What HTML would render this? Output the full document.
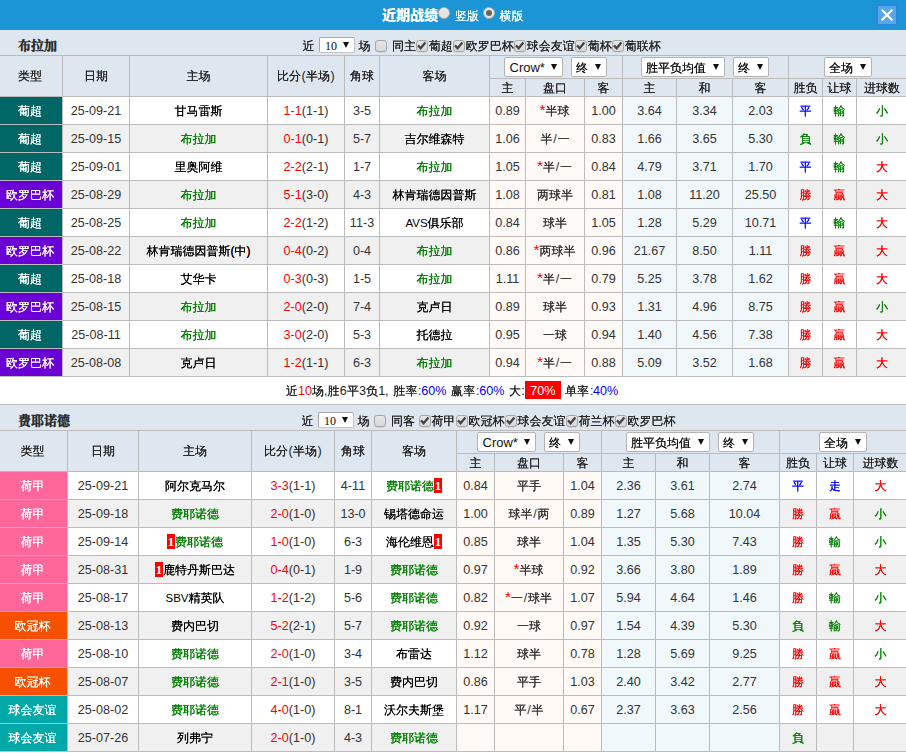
<!DOCTYPE html><html lang="zh-CN"><head><meta charset="utf-8"><title>近期战绩</title><style>
*{box-sizing:border-box;margin:0;padding:0}
html,body{width:906px;height:753px;overflow:hidden;background:#fff}
body{font-family:"Liberation Sans","WenQuanYi Zen Hei","Noto Sans CJK SC",sans-serif;font-size:12px;color:#333;position:relative}
.bar{position:relative;height:30px;background:#1b95d6;color:#fff}
.title{font-family:"Liberation Sans","Noto Sans CJK SC",sans-serif;position:absolute;left:382px;top:0;line-height:31px;font-size:14px;font-weight:bold;letter-spacing:0;text-shadow:0 0 0}
.rl{position:absolute;top:0;line-height:33px;font-size:12px}
.radio{position:absolute;top:7px;width:12px;height:12px;border-radius:50%;background:#e4e4e4;border:1px solid #aaa;box-shadow:inset 0 1px 1px #fff}
.radio.on:after{content:"";position:absolute;left:2px;top:2px;width:6px;height:6px;border-radius:50%;background:#666}
.close{position:absolute;left:876px;top:4px;width:22px;height:22px;border:2px solid #2b86dd;background:#55a7ea}
.close svg{display:block}
.sec{position:relative;height:26px;background:#dee6ef;border-bottom:1px solid #bbb}
.tn{position:absolute;left:18px;top:0;line-height:31px;font-size:13px;font-weight:bold;-webkit-text-stroke:0.35px #222;color:#222;font-family:"Liberation Serif","Noto Serif CJK SC",serif}
.ft{position:absolute;top:0;line-height:33px;white-space:nowrap;color:#222}
.cba{position:absolute;top:10px}
.cb{display:block;width:11.5px;height:11.5px;border:1px solid #a6a6a6;border-radius:3px;background:linear-gradient(#e6e6e6,#d8d8d8);box-shadow:0 0.5px 0.5px rgba(0,0,0,.12)}
.cb svg{display:block;margin:-1px 0 0 -1px}
.sel{position:absolute;display:block;background:#fff;border:1px solid #b4b4b4;border-radius:2px;height:20px;top:1px;text-align:left;color:#111}
.sel .st{position:absolute;left:4px;top:0;white-space:nowrap;line-height:21px;font-size:12px}
.sel .st.en{font-size:13px;line-height:19px;left:4.5px}
.sel i{position:absolute;right:5.5px;top:6px;width:0;height:0;border-left:3.5px solid transparent;border-right:3.5px solid transparent;border-top:6px solid #111}
.sel.s10{top:7px;height:16px;width:36px;border-color:#a8a8a8 #c4c4c4 #c4c4c4 #a8a8a8}
.sel.s10 .st{font-family:"Liberation Serif",serif;font-size:12px;line-height:17px;left:5px}
.sel.s10 i{top:4px;right:5.5px}
table{border-collapse:separate;border-spacing:0;table-layout:fixed;width:906px}
th,td{border-right:1px solid #bbb;border-bottom:1px solid #bbb;text-align:center;font-weight:normal;white-space:nowrap;overflow:hidden;padding:0}
th:last-child,td:last-child{border-right:0}
tr.h1 th:first-child{padding-right:2px}
th{background:#dee6ef;color:#222}
tr.h1 th{height:23px}
tr.h1 th[rowspan]{height:41px;line-height:40px;padding-top:0}
tr.h2 th{height:18px;line-height:15px;padding-top:2px}
th.hs{position:relative}
td{height:28px;line-height:27px;background:#fff}
td.c{padding-top:2px;line-height:25px}
td.l{padding-top:2px;line-height:25px;font-size:12.6px}
tr.odd td{background:#f0f0f0}
td.lg{color:#fff;padding-right:2px}
td.ao,tr.odd td.ao{background:#fffaf6}
td.eo,tr.odd td.eo{background:#f0f8fc}
.r{color:#f00}.g{color:#008000}.b{color:#00f}.k{color:#000}.n{color:inherit}
.rc{display:inline-block;background:#f00;color:#fff;font-weight:bold;width:8px;height:15px;line-height:16px;font-size:13px;font-family:"Liberation Serif",serif;text-align:center;vertical-align:top;margin-top:4px;overflow:hidden}
.sum{position:relative;height:28px;border-bottom:1px solid #bbb;background:#fff;color:#222}
.sg{position:absolute;top:0;white-space:nowrap}
.sg.c{line-height:29px}
.sg.l{line-height:29px;font-size:12.6px}
.hot{position:absolute;top:4px;width:35.5px;height:18px;background:#f00;color:#fff;text-align:center;line-height:21px;font-size:12.6px}
.star{display:inline-block;width:6px;margin-left:-1px;margin-top:2px;height:12px;font-size:15.5px;line-height:18px;vertical-align:top;text-align:center;overflow:visible;font-family:"Liberation Sans",sans-serif}
td.c,th,.ft,.sg.c,.rl,.sel .st{text-shadow:0 0 0}
.sel .st.en,.sel.s10 .st,.star,.rc{text-shadow:none}
.la{text-shadow:none;font-size:11.5px}
.sl{text-shadow:none;font-size:12.6px;margin:0 0.7px}
.pa{text-shadow:none;font-size:12.6px;margin:0 0.4px}

</style></head><body>
<div class="bar"><span class="title">近期战绩</span><span class="radio" style="left:438px"></span><span class="rl" style="left:455px">竖版</span><span class="radio on" style="left:483px"></span><span class="rl" style="left:499.5px">横版</span><span class="close"><svg viewBox="0 0 18 18" width="18" height="18"><path d="M4.2 4.2 L13.8 13.8 M13.8 4.2 L4.2 13.8" stroke="#fff" stroke-width="2" stroke-linecap="round"/></svg></span></div>
<div class="sec"><span class="tn">布拉加</span>
<span class="ft" style="left:302.5px">近</span><span class="sel s10" style="left:319px"><span class="st">10</span><i></i></span><span class="ft" style="left:358.5px">场</span><span class="cba" style="left:375px"><span class="cb"></span></span><span class="ft" style="left:392px">同主</span><span class="cba" style="left:416.2px"><span class="cb"><svg viewBox="0 0 11.5 11" width="11.5" height="11"><path d="M2 5.4 L4.6 8.2 L9.4 2.4" fill="none" stroke="#444" stroke-width="2.3"/></svg></span></span><span class="ft" style="left:428.7px">葡超</span><span class="cba" style="left:453.2px"><span class="cb"><svg viewBox="0 0 11.5 11" width="11.5" height="11"><path d="M2 5.4 L4.6 8.2 L9.4 2.4" fill="none" stroke="#444" stroke-width="2.3"/></svg></span></span><span class="ft" style="left:465.7px">欧罗巴杯</span><span class="cba" style="left:514.2px"><span class="cb"><svg viewBox="0 0 11.5 11" width="11.5" height="11"><path d="M2 5.4 L4.6 8.2 L9.4 2.4" fill="none" stroke="#444" stroke-width="2.3"/></svg></span></span><span class="ft" style="left:526.7px">球会友谊</span><span class="cba" style="left:575.2px"><span class="cb"><svg viewBox="0 0 11.5 11" width="11.5" height="11"><path d="M2 5.4 L4.6 8.2 L9.4 2.4" fill="none" stroke="#444" stroke-width="2.3"/></svg></span></span><span class="ft" style="left:587.7px">葡杯</span><span class="cba" style="left:612.2px"><span class="cb"><svg viewBox="0 0 11.5 11" width="11.5" height="11"><path d="M2 5.4 L4.6 8.2 L9.4 2.4" fill="none" stroke="#444" stroke-width="2.3"/></svg></span></span><span class="ft" style="left:624.7px">葡联杯</span>
</div>
<table><colgroup><col style="width:63px"><col style="width:67px"><col style="width:138px"><col style="width:77px"><col style="width:35px"><col style="width:110px"><col style="width:36px"><col style="width:59px"><col style="width:38px"><col style="width:54px"><col style="width:56px"><col style="width:56px"><col style="width:34px"><col style="width:34px"><col style="width:50px"></colgroup>
<tr class="h1">
<th rowspan="2">类型</th>
<th rowspan="2">日期</th>
<th rowspan="2">主场</th>
<th rowspan="2">比分<span class="pa">(</span>半场<span class="pa">)</span></th>
<th rowspan="2">角球</th>
<th rowspan="2">客场</th>
<th colspan="3" class="hs"><span class="sel" style="left:14px;width:59px"><span class="st en">Crow*</span><i></i></span><span class="sel" style="left:81px;width:36px"><span class="st">终</span><i></i></span></th>
<th colspan="3" class="hs"><span class="sel" style="left:18px;width:84px"><span class="st">胜平负均值</span><i></i></span><span class="sel" style="left:110px;width:36px"><span class="st">终</span><i></i></span></th>
<th colspan="3" class="hs"><span class="sel" style="left:35px;width:48px"><span class="st">全场</span><i></i></span></th>
</tr><tr class="h2">
<th>主</th>
<th>盘口</th>
<th>客</th>
<th>主</th>
<th>和</th>
<th>客</th>
<th>胜负</th>
<th>让球</th>
<th>进球数</th>
</tr>
<tr class="ev">
<td class="lg c" style="background:#006666">葡超</td>
<td class="l">25-09-21</td>
<td class="c"><span class="k">甘马雷斯</span></td>
<td class="l"><span class="r">1-1</span>(1-1)</td>
<td class="l">3-5</td>
<td class="c"><span class="g">布拉加</span></td>
<td class="ao l">0.89</td><td class="ao c"><span class="r star">*</span>半球</td><td class="ao l">1.00</td>
<td class="eo l">3.64</td><td class="eo l">3.34</td><td class="eo l">2.03</td>
<td class="c"><span class="b">平</span></td><td class="c"><span class="g">輸</span></td><td class="c"><span class="g">小</span></td>
</tr>
<tr class="odd">
<td class="lg c" style="background:#006666">葡超</td>
<td class="l">25-09-15</td>
<td class="c"><span class="g">布拉加</span></td>
<td class="l"><span class="r">0-1</span>(0-1)</td>
<td class="l">5-7</td>
<td class="c"><span class="k">吉尔维森特</span></td>
<td class="ao l">1.06</td><td class="ao c">半<span class="sl">/</span>一</td><td class="ao l">0.83</td>
<td class="eo l">1.66</td><td class="eo l">3.65</td><td class="eo l">5.30</td>
<td class="c"><span class="g">負</span></td><td class="c"><span class="g">輸</span></td><td class="c"><span class="g">小</span></td>
</tr>
<tr class="ev">
<td class="lg c" style="background:#006666">葡超</td>
<td class="l">25-09-01</td>
<td class="c"><span class="k">里奥阿维</span></td>
<td class="l"><span class="r">2-2</span>(2-1)</td>
<td class="l">1-7</td>
<td class="c"><span class="g">布拉加</span></td>
<td class="ao l">1.05</td><td class="ao c"><span class="r star">*</span>半<span class="sl">/</span>一</td><td class="ao l">0.84</td>
<td class="eo l">4.79</td><td class="eo l">3.71</td><td class="eo l">1.70</td>
<td class="c"><span class="b">平</span></td><td class="c"><span class="g">輸</span></td><td class="c"><span class="r">大</span></td>
</tr>
<tr class="odd">
<td class="lg c" style="background:#6b00d6">欧罗巴杯</td>
<td class="l">25-08-29</td>
<td class="c"><span class="g">布拉加</span></td>
<td class="l"><span class="r">5-1</span>(3-0)</td>
<td class="l">4-3</td>
<td class="c"><span class="k">林肯瑞德因普斯</span></td>
<td class="ao l">1.08</td><td class="ao c">两球半</td><td class="ao l">0.81</td>
<td class="eo l">1.08</td><td class="eo l">11.20</td><td class="eo l">25.50</td>
<td class="c"><span class="r">勝</span></td><td class="c"><span class="r">贏</span></td><td class="c"><span class="r">大</span></td>
</tr>
<tr class="ev">
<td class="lg c" style="background:#006666">葡超</td>
<td class="l">25-08-25</td>
<td class="c"><span class="g">布拉加</span></td>
<td class="l"><span class="r">2-2</span>(1-2)</td>
<td class="l">11-3</td>
<td class="c"><span class="k"><span class="la">AVS</span>俱乐部</span></td>
<td class="ao l">0.84</td><td class="ao c">球半</td><td class="ao l">1.05</td>
<td class="eo l">1.28</td><td class="eo l">5.29</td><td class="eo l">10.71</td>
<td class="c"><span class="b">平</span></td><td class="c"><span class="g">輸</span></td><td class="c"><span class="r">大</span></td>
</tr>
<tr class="odd">
<td class="lg c" style="background:#6b00d6">欧罗巴杯</td>
<td class="l">25-08-22</td>
<td class="c"><span class="k">林肯瑞德因普斯(中)</span></td>
<td class="l"><span class="r">0-4</span>(0-2)</td>
<td class="l">0-4</td>
<td class="c"><span class="g">布拉加</span></td>
<td class="ao l">0.86</td><td class="ao c"><span class="r star">*</span>两球半</td><td class="ao l">0.96</td>
<td class="eo l">21.67</td><td class="eo l">8.50</td><td class="eo l">1.11</td>
<td class="c"><span class="r">勝</span></td><td class="c"><span class="r">贏</span></td><td class="c"><span class="r">大</span></td>
</tr>
<tr class="ev">
<td class="lg c" style="background:#006666">葡超</td>
<td class="l">25-08-18</td>
<td class="c"><span class="k">艾华卡</span></td>
<td class="l"><span class="r">0-3</span>(0-3)</td>
<td class="l">1-5</td>
<td class="c"><span class="g">布拉加</span></td>
<td class="ao l">1.11</td><td class="ao c"><span class="r star">*</span>半<span class="sl">/</span>一</td><td class="ao l">0.79</td>
<td class="eo l">5.25</td><td class="eo l">3.78</td><td class="eo l">1.62</td>
<td class="c"><span class="r">勝</span></td><td class="c"><span class="r">贏</span></td><td class="c"><span class="r">大</span></td>
</tr>
<tr class="odd">
<td class="lg c" style="background:#6b00d6">欧罗巴杯</td>
<td class="l">25-08-15</td>
<td class="c"><span class="g">布拉加</span></td>
<td class="l"><span class="r">2-0</span>(2-0)</td>
<td class="l">7-4</td>
<td class="c"><span class="k">克卢日</span></td>
<td class="ao l">0.89</td><td class="ao c">球半</td><td class="ao l">0.93</td>
<td class="eo l">1.31</td><td class="eo l">4.96</td><td class="eo l">8.75</td>
<td class="c"><span class="r">勝</span></td><td class="c"><span class="r">贏</span></td><td class="c"><span class="g">小</span></td>
</tr>
<tr class="ev">
<td class="lg c" style="background:#006666">葡超</td>
<td class="l">25-08-11</td>
<td class="c"><span class="g">布拉加</span></td>
<td class="l"><span class="r">3-0</span>(2-0)</td>
<td class="l">5-3</td>
<td class="c"><span class="k">托德拉</span></td>
<td class="ao l">0.95</td><td class="ao c">一球</td><td class="ao l">0.94</td>
<td class="eo l">1.40</td><td class="eo l">4.56</td><td class="eo l">7.38</td>
<td class="c"><span class="r">勝</span></td><td class="c"><span class="r">贏</span></td><td class="c"><span class="r">大</span></td>
</tr>
<tr class="odd">
<td class="lg c" style="background:#6b00d6">欧罗巴杯</td>
<td class="l">25-08-08</td>
<td class="c"><span class="k">克卢日</span></td>
<td class="l"><span class="r">1-2</span>(1-1)</td>
<td class="l">6-3</td>
<td class="c"><span class="g">布拉加</span></td>
<td class="ao l">0.94</td><td class="ao c"><span class="r star">*</span>半<span class="sl">/</span>一</td><td class="ao l">0.88</td>
<td class="eo l">5.09</td><td class="eo l">3.52</td><td class="eo l">1.68</td>
<td class="c"><span class="r">勝</span></td><td class="c"><span class="r">贏</span></td><td class="c"><span class="r">大</span></td>
</tr>
</table>
<div class="sum"><span class="sg c " style="left:286px">近</span><span class="sg l r" style="left:298px">10</span><span class="sg c " style="left:312px">场</span><span class="sg l " style="left:324px">,</span><span class="sg c " style="left:327.5px">胜</span><span class="sg l n" style="left:339.8px">6</span><span class="sg c " style="left:347px">平</span><span class="sg l n" style="left:359px">3</span><span class="sg c " style="left:366px">负</span><span class="sg l n" style="left:378.3px">1</span><span class="sg l " style="left:385px">,</span><span class="sg c " style="left:393.3px">胜</span><span class="sg c " style="left:405.5px">率</span><span class="sg l " style="left:418px">:</span><span class="sg l b" style="left:421.3px">60%</span><span class="sg c " style="left:451px">赢</span><span class="sg c " style="left:463.3px">率</span><span class="sg l " style="left:476px">:</span><span class="sg l b" style="left:479.3px">60%</span><span class="sg c " style="left:509px">大</span><span class="sg l " style="left:521.3px">:</span><span class="hot" style="left:525px">70%</span><span class="sg c " style="left:565px">单</span><span class="sg c " style="left:577px">率</span><span class="sg l " style="left:590px">:</span><span class="sg l b" style="left:593px">40%</span></div>
<div class="sec"><span class="tn">费耶诺德</span>
<span class="ft" style="left:301.5px">近</span><span class="sel s10" style="left:318px"><span class="st">10</span><i></i></span><span class="ft" style="left:357.5px">场</span><span class="cba" style="left:374px"><span class="cb"></span></span><span class="ft" style="left:391px">同客</span><span class="cba" style="left:419px"><span class="cb"><svg viewBox="0 0 11.5 11" width="11.5" height="11"><path d="M2 5.4 L4.6 8.2 L9.4 2.4" fill="none" stroke="#444" stroke-width="2.3"/></svg></span></span><span class="ft" style="left:431.5px">荷甲</span><span class="cba" style="left:456px"><span class="cb"><svg viewBox="0 0 11.5 11" width="11.5" height="11"><path d="M2 5.4 L4.6 8.2 L9.4 2.4" fill="none" stroke="#444" stroke-width="2.3"/></svg></span></span><span class="ft" style="left:468.5px">欧冠杯</span><span class="cba" style="left:505px"><span class="cb"><svg viewBox="0 0 11.5 11" width="11.5" height="11"><path d="M2 5.4 L4.6 8.2 L9.4 2.4" fill="none" stroke="#444" stroke-width="2.3"/></svg></span></span><span class="ft" style="left:517.5px">球会友谊</span><span class="cba" style="left:566px"><span class="cb"><svg viewBox="0 0 11.5 11" width="11.5" height="11"><path d="M2 5.4 L4.6 8.2 L9.4 2.4" fill="none" stroke="#444" stroke-width="2.3"/></svg></span></span><span class="ft" style="left:578.5px">荷兰杯</span><span class="cba" style="left:615px"><span class="cb"><svg viewBox="0 0 11.5 11" width="11.5" height="11"><path d="M2 5.4 L4.6 8.2 L9.4 2.4" fill="none" stroke="#444" stroke-width="2.3"/></svg></span></span><span class="ft" style="left:627.5px">欧罗巴杯</span>
</div>
<table><colgroup><col style="width:68px"><col style="width:71px"><col style="width:113px"><col style="width:83px"><col style="width:37px"><col style="width:85px"><col style="width:38px"><col style="width:69px"><col style="width:38px"><col style="width:54px"><col style="width:54px"><col style="width:70px"><col style="width:37px"><col style="width:37px"><col style="width:53px"></colgroup>
<tr class="h1">
<th rowspan="2">类型</th>
<th rowspan="2">日期</th>
<th rowspan="2">主场</th>
<th rowspan="2">比分<span class="pa">(</span>半场<span class="pa">)</span></th>
<th rowspan="2">角球</th>
<th rowspan="2">客场</th>
<th colspan="3" class="hs"><span class="sel" style="left:20px;width:59px"><span class="st en">Crow*</span><i></i></span><span class="sel" style="left:87px;width:36px"><span class="st">终</span><i></i></span></th>
<th colspan="3" class="hs"><span class="sel" style="left:24px;width:84px"><span class="st">胜平负均值</span><i></i></span><span class="sel" style="left:116px;width:36px"><span class="st">终</span><i></i></span></th>
<th colspan="3" class="hs"><span class="sel" style="left:39px;width:48px"><span class="st">全场</span><i></i></span></th>
</tr><tr class="h2">
<th>主</th>
<th>盘口</th>
<th>客</th>
<th>主</th>
<th>和</th>
<th>客</th>
<th>胜负</th>
<th>让球</th>
<th>进球数</th>
</tr>
<tr class="ev">
<td class="lg c" style="background:#ff6699">荷甲</td>
<td class="l">25-09-21</td>
<td class="c"><span class="k">阿尔克马尔</span></td>
<td class="l"><span class="r">3-3</span>(1-1)</td>
<td class="l">4-11</td>
<td class="c"><span class="g">费耶诺德<b class="rc">1</b></span></td>
<td class="ao l">0.84</td><td class="ao c">平手</td><td class="ao l">1.04</td>
<td class="eo l">2.36</td><td class="eo l">3.61</td><td class="eo l">2.74</td>
<td class="c"><span class="b">平</span></td><td class="c"><span class="b">走</span></td><td class="c"><span class="r">大</span></td>
</tr>
<tr class="odd">
<td class="lg c" style="background:#ff6699">荷甲</td>
<td class="l">25-09-18</td>
<td class="c"><span class="g">费耶诺德</span></td>
<td class="l"><span class="r">2-0</span>(1-0)</td>
<td class="l">13-0</td>
<td class="c"><span class="k">锡塔德命运</span></td>
<td class="ao l">1.00</td><td class="ao c">球半<span class="sl">/</span>两</td><td class="ao l">0.89</td>
<td class="eo l">1.27</td><td class="eo l">5.68</td><td class="eo l">10.04</td>
<td class="c"><span class="r">勝</span></td><td class="c"><span class="r">贏</span></td><td class="c"><span class="g">小</span></td>
</tr>
<tr class="ev">
<td class="lg c" style="background:#ff6699">荷甲</td>
<td class="l">25-09-14</td>
<td class="c"><span class="g"><b class="rc">1</b>费耶诺德</span></td>
<td class="l"><span class="r">1-0</span>(1-0)</td>
<td class="l">6-3</td>
<td class="c"><span class="k">海伦维恩<b class="rc">1</b></span></td>
<td class="ao l">0.85</td><td class="ao c">球半</td><td class="ao l">1.04</td>
<td class="eo l">1.35</td><td class="eo l">5.30</td><td class="eo l">7.43</td>
<td class="c"><span class="r">勝</span></td><td class="c"><span class="g">輸</span></td><td class="c"><span class="g">小</span></td>
</tr>
<tr class="odd">
<td class="lg c" style="background:#ff6699">荷甲</td>
<td class="l">25-08-31</td>
<td class="c"><span class="k"><b class="rc">1</b>鹿特丹斯巴达</span></td>
<td class="l"><span class="r">0-4</span>(0-1)</td>
<td class="l">1-9</td>
<td class="c"><span class="g">费耶诺德</span></td>
<td class="ao l">0.97</td><td class="ao c"><span class="r star">*</span>半球</td><td class="ao l">0.92</td>
<td class="eo l">3.66</td><td class="eo l">3.80</td><td class="eo l">1.89</td>
<td class="c"><span class="r">勝</span></td><td class="c"><span class="r">贏</span></td><td class="c"><span class="r">大</span></td>
</tr>
<tr class="ev">
<td class="lg c" style="background:#ff6699">荷甲</td>
<td class="l">25-08-17</td>
<td class="c"><span class="k"><span class="la">SBV</span>精英队</span></td>
<td class="l"><span class="r">1-2</span>(1-2)</td>
<td class="l">5-6</td>
<td class="c"><span class="g">费耶诺德</span></td>
<td class="ao l">0.82</td><td class="ao c"><span class="r star">*</span>一<span class="sl">/</span>球半</td><td class="ao l">1.07</td>
<td class="eo l">5.94</td><td class="eo l">4.64</td><td class="eo l">1.46</td>
<td class="c"><span class="r">勝</span></td><td class="c"><span class="g">輸</span></td><td class="c"><span class="g">小</span></td>
</tr>
<tr class="odd">
<td class="lg c" style="background:#f75000">欧冠杯</td>
<td class="l">25-08-13</td>
<td class="c"><span class="k">费内巴切</span></td>
<td class="l"><span class="r">5-2</span>(2-1)</td>
<td class="l">5-7</td>
<td class="c"><span class="g">费耶诺德</span></td>
<td class="ao l">0.92</td><td class="ao c">一球</td><td class="ao l">0.97</td>
<td class="eo l">1.54</td><td class="eo l">4.39</td><td class="eo l">5.30</td>
<td class="c"><span class="g">負</span></td><td class="c"><span class="g">輸</span></td><td class="c"><span class="r">大</span></td>
</tr>
<tr class="ev">
<td class="lg c" style="background:#ff6699">荷甲</td>
<td class="l">25-08-10</td>
<td class="c"><span class="g">费耶诺德</span></td>
<td class="l"><span class="r">2-0</span>(1-0)</td>
<td class="l">3-4</td>
<td class="c"><span class="k">布雷达</span></td>
<td class="ao l">1.12</td><td class="ao c">球半</td><td class="ao l">0.78</td>
<td class="eo l">1.28</td><td class="eo l">5.69</td><td class="eo l">9.25</td>
<td class="c"><span class="r">勝</span></td><td class="c"><span class="r">贏</span></td><td class="c"><span class="g">小</span></td>
</tr>
<tr class="odd">
<td class="lg c" style="background:#f75000">欧冠杯</td>
<td class="l">25-08-07</td>
<td class="c"><span class="g">费耶诺德</span></td>
<td class="l"><span class="r">2-1</span>(1-0)</td>
<td class="l">3-5</td>
<td class="c"><span class="k">费内巴切</span></td>
<td class="ao l">0.86</td><td class="ao c">平手</td><td class="ao l">1.03</td>
<td class="eo l">2.40</td><td class="eo l">3.42</td><td class="eo l">2.77</td>
<td class="c"><span class="r">勝</span></td><td class="c"><span class="r">贏</span></td><td class="c"><span class="r">大</span></td>
</tr>
<tr class="ev">
<td class="lg c" style="background:#00a8a8">球会友谊</td>
<td class="l">25-08-02</td>
<td class="c"><span class="g">费耶诺德</span></td>
<td class="l"><span class="r">4-0</span>(1-0)</td>
<td class="l">8-1</td>
<td class="c"><span class="k">沃尔夫斯堡</span></td>
<td class="ao l">1.17</td><td class="ao c">平<span class="sl">/</span>半</td><td class="ao l">0.67</td>
<td class="eo l">2.37</td><td class="eo l">3.63</td><td class="eo l">2.56</td>
<td class="c"><span class="r">勝</span></td><td class="c"><span class="r">贏</span></td><td class="c"><span class="r">大</span></td>
</tr>
<tr class="odd">
<td class="lg c" style="background:#00a8a8">球会友谊</td>
<td class="l">25-07-26</td>
<td class="c"><span class="k">列弗宁</span></td>
<td class="l"><span class="r">2-0</span>(1-0)</td>
<td class="l">4-3</td>
<td class="c"><span class="g">费耶诺德</span></td>
<td class="ao l"></td><td class="ao c"></td><td class="ao l"></td>
<td class="eo l"></td><td class="eo l"></td><td class="eo l"></td>
<td class="c"><span class="g">負</span></td><td class="c"></td><td class="c"></td>
</tr>
</table>
</body></html>
